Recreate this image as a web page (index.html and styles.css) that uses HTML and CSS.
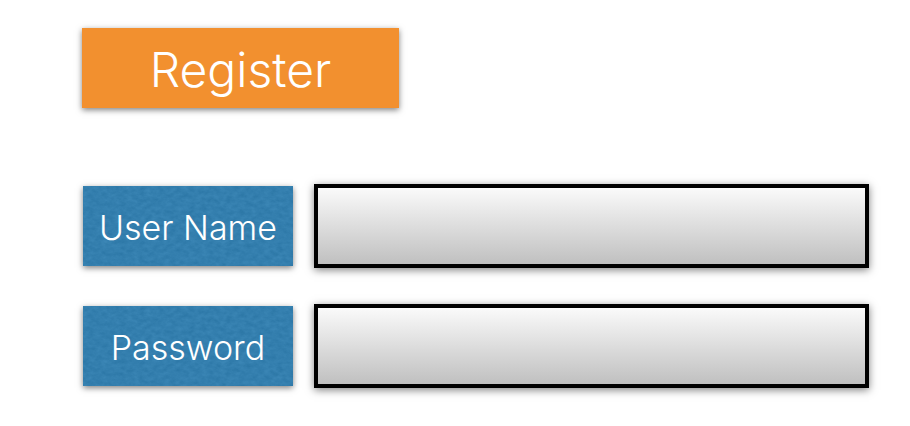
FILE: index.html
```html
<!DOCTYPE html>
<html lang="en">
<head>
<meta charset="utf-8">
<meta name="viewport" content="width=device-width, initial-scale=1">
<title>Register</title>
<link rel="stylesheet" href="styles.css">
</head>
<body>
<svg class="filters" width="0" height="0" aria-hidden="true">
  <filter id="paper" x="0" y="0" width="100%" height="100%" color-interpolation-filters="sRGB">
    <feTurbulence type="fractalNoise" baseFrequency="0.16 0.24" numOctaves="4" seed="7" result="noise"/>
    <feColorMatrix in="noise" type="matrix" values="0.08 0 0 0 0.162  0.08 0 0 0 0.456  0.08 0 0 0 0.642  0 0 0 0 1"/>
  </filter>
</svg>
<form class="form">
  <button class="register" type="submit">Register</button>
  <div class="fields">
    <div class="field">
      <label class="label" for="username">User Name</label>
      <input class="input" id="username" type="text" autocomplete="username">
    </div>
    <div class="field">
      <label class="label" for="password">Password</label>
      <input class="input" id="password" type="password" autocomplete="new-password">
    </div>
  </div>
</form>
</body>
</html>
```

FILE: styles.css
```css
* {
  box-sizing: border-box;
}

body {
  margin: 0;
  background: #fff;
  font-family: Inter, "Liberation Sans", sans-serif;
  font-weight: 300;
}

.filters {
  position: absolute;
}

.form {
  display: flex;
  flex-direction: column;
  align-items: flex-start;
  gap: 76px;
  padding: 28px 41px 36px 82px;
}

.register {
  width: 317px;
  max-width: 100%;
  padding: 12px 16px 8px;
  border: 0;
  border-radius: 0;
  background: #f2902f;
  box-shadow: 0 2px 6px rgba(0, 0, 0, 0.5);
  color: #fff;
  font: inherit;
  font-size: 48px;
  line-height: 60px;
}

.fields {
  display: flex;
  flex-direction: column;
  gap: 36px;
  width: 100%;
  padding-left: 1px;
}

.field {
  display: flex;
  align-items: center;
  gap: 21px;
}

.label {
  position: relative;
  isolation: isolate;
  flex: 0 0 210px;
  padding: 20px 0 16px;
  background: #337eae;
  box-shadow: 0 2px 6px rgba(0, 0, 0, 0.5);
  color: #fff;
  font-size: 34px;
  line-height: 44px;
  text-align: center;
  white-space: nowrap;
}

/* Paper grain under the label text */
.label::before {
  content: "";
  position: absolute;
  inset: 0;
  z-index: -1;
  background: #337eae;
  filter: url(#paper);
}

.input {
  flex: 1;
  min-width: 0;
  height: 84px;
  padding: 0 16px;
  border: 4px solid #000;
  border-radius: 0;
  outline: 0;
  background: linear-gradient(#fafafa, #c0c0c0);
  box-shadow: 0 2px 8px rgba(0, 0, 0, 0.5);
  color: #000;
  font: inherit;
  font-size: 34px;
}
```
